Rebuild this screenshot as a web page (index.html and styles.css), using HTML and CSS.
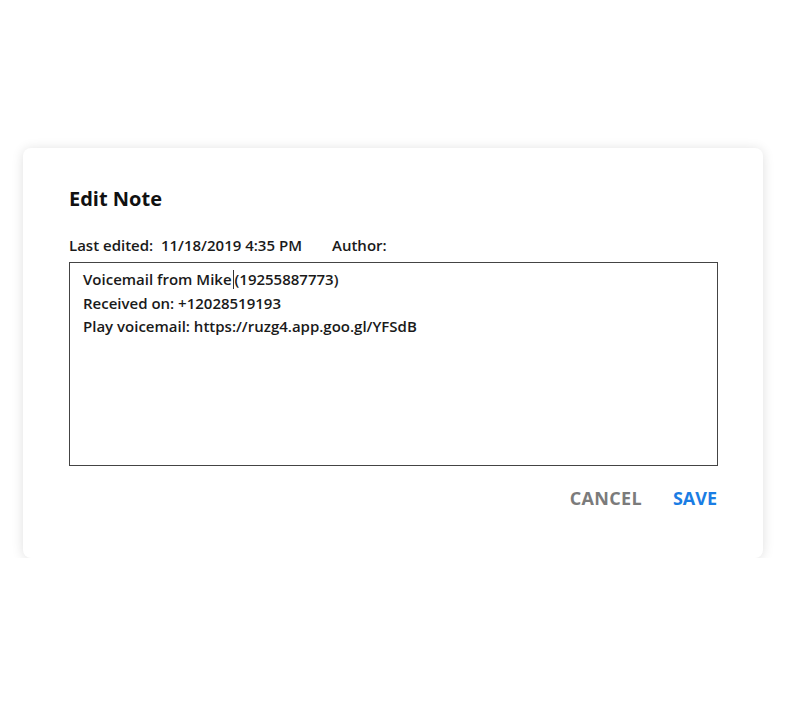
FILE: index.html
```html
<!DOCTYPE html>
<html>
<head>
<meta charset="utf-8">
<link rel="stylesheet" href="styles.css">
</head>
<body>
<div class="card">
  <h1 class="title">Edit Note</h1>
  <div class="meta">
    <span class="meta-item">Last edited:&nbsp; 11/18/2019 4:35 PM</span>
    <span class="meta-item">Author:</span>
  </div>
  <div class="note">
    <div class="line">Voicemail from Mike<span class="caret"></span>(19255887773)</div>
    <div class="line">Received on: +12028519193</div>
    <div class="line">Play voicemail: https://ruzg4.app.goo.gl/YFSdB</div>
  </div>
  <div class="actions">
    <button class="btn cancel">CANCEL</button>
    <button class="btn save">SAVE</button>
  </div>
</div>
</body>
</html>
```
FILE: styles.css
```css
html, body {
  margin: 0;
  padding: 0;
  background: #ffffff;
}
body {
  font-family: "Open Sans", "Liberation Sans", sans-serif;
  color: #111;
  padding-top: 148px;
  padding-left: 23px;
}
.card {
  box-sizing: border-box;
  width: 740px;
  height: 410px;
  background: #fff;
  border-radius: 8px;
  box-shadow: 0 1px 12px rgba(0, 0, 0, 0.13);
  padding: 37px 45px 0 46px;
}
.title {
  margin: 0;
  font-size: 20px;
  line-height: 28px;
  font-weight: 700;
  color: #111;
}
.meta {
  margin-top: 22px;
  margin-bottom: 7px;
  font-size: 15px;
  line-height: 20px;
  font-weight: 600;
  display: flex;
  gap: 30px;
  color: #1a1a1a;
}
.note {
  box-sizing: border-box;
  height: 204px;
  border: 1px solid #444;
  padding: 5px 13px;
  font-size: 15px;
  line-height: 23.5px;
  font-weight: 600;
  color: #1a1a1a;
}
.caret {
  display: inline-block;
  width: 1px;
  height: 19px;
  background: #333;
  vertical-align: -4px;
  margin: 0 1px 0 1px;
}
.actions {
  margin-top: 20px;
  display: flex;
  justify-content: flex-end;
  gap: 31px;
  padding-right: 1px;
}
.btn {
  border: none;
  background: none;
  padding: 0;
  font-family: "Open Sans", "Liberation Sans", sans-serif;
  font-size: 18px;
  line-height: 24px;
  font-weight: 700;
  cursor: pointer;
}
.cancel {
  color: #7b7b7b;
  letter-spacing: 0.3px;
}
.save {
  color: #1a7de4;
}
```
